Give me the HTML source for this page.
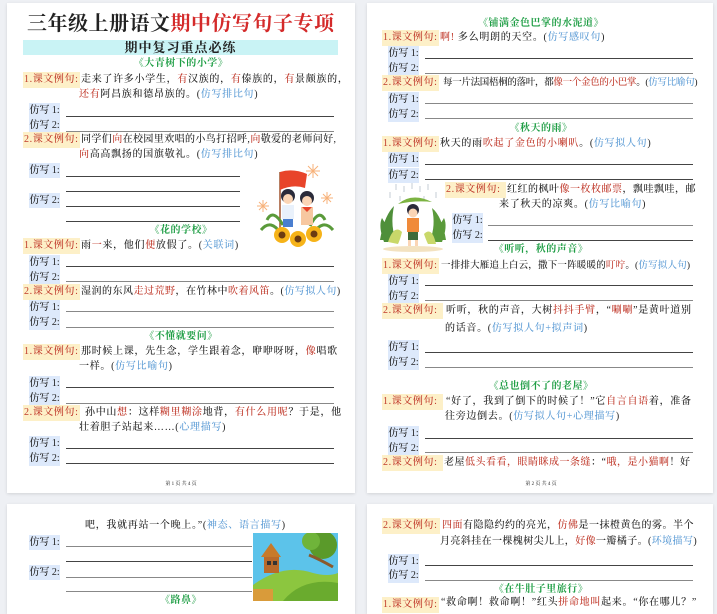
<!DOCTYPE html>
<html><head><meta charset="utf-8"><style>
*{margin:0;padding:0;box-sizing:border-box}
body{width:717px;height:601px;overflow:hidden;background:#eef0f4;position:relative;font-family:"Liberation Serif","Noto Serif CJK SC",serif;font-size:10px;color:#222}
.pg{position:absolute;background:#fff;box-shadow:0 1px 3px rgba(0,0,0,.12)}
.t{position:absolute;line-height:14px;white-space:nowrap;letter-spacing:0.7px;font-weight:500}
.r{color:#c0392b}.b{color:#5b9bd5}
.g{position:absolute;color:#1f9e45;font-weight:bold;line-height:14px;white-space:nowrap;transform:translateX(-50%);letter-spacing:0.5px}
.lab{position:absolute;background:#fdf0c8;color:#c0392b;height:16px;line-height:16px;padding-left:1px;white-space:nowrap;font-weight:500;letter-spacing:0.6px}
.fx{position:absolute;background:#dde9fb;width:31px;height:15px;line-height:15px;text-align:center;white-space:nowrap;font-size:10px;font-weight:500}
.ln{position:absolute;height:0;border-top:1px solid #444}
.ft{position:absolute;font-size:5px;transform:translateX(-50%);white-space:nowrap;line-height:6px}
</style></head><body>

<div class="pg" style="left:7px;top:3px;width:348px;height:490px"></div>
<div class="pg" style="left:367px;top:3px;width:346px;height:490px"></div>
<div class="pg" style="left:7px;top:504px;width:348px;height:110px"></div>
<div class="pg" style="left:367px;top:504px;width:346px;height:110px"></div>

<!-- LEFT PAGE -->
<div class="t" style="left:27px;top:12px;font-size:20px;line-height:24px;font-weight:bold;letter-spacing:0.5px">三年级上册语文<span style="color:#d42a2a">期中仿写句子专项</span></div>
<div style="position:absolute;left:23px;top:40px;width:315px;height:15px;background:#c9f3f5;text-align:center;font-weight:bold;font-size:13px;line-height:15px;letter-spacing:1px">期中复习重点必练</div>

<div class="g" style="left:181px;top:57px">《大青树下的小学》</div>
<div class="lab" style="left:23px;top:72px;width:57px">1.课文例句:</div>
<div class="t" style="left:81px;top:73px">走来了许多小学生，<span class="r">有</span>汉族的，<span class="r">有</span>傣族的，<span class="r">有</span>景颇族的，</div>
<div class="t" style="left:79px;top:88px"><span class="r">还有</span>阿昌族和德昂族的。(<span class="b">仿写排比句</span>)</div>
<div class="fx" style="left:29px;top:103px">仿写 1:</div><div class="ln" style="left:66px;top:116px;width:268px"></div>
<div class="fx" style="left:29px;top:118px">仿写 2:</div><div class="ln" style="left:66px;top:131px;width:268px;border-color:#888"></div>

<div class="lab" style="left:23px;top:132px;width:57px">2.课文例句:</div>
<div class="t" style="left:81px;top:133px;letter-spacing:0.4px">同学们<span class="r">向</span>在校园里欢唱的小鸟打招呼,<span class="r">向</span>敬爱的老师问好,</div>
<div class="t" style="left:79px;top:148px"><span class="r">向</span>高高飘扬的国旗敬礼。(<span class="b">仿写排比句</span>)</div>
<div class="fx" style="left:29px;top:163px">仿写 1:</div><div class="ln" style="left:66px;top:176px;width:174px"></div>
<div class="ln" style="left:66px;top:191px;width:174px"></div>
<div class="fx" style="left:29px;top:193px">仿写 2:</div><div class="ln" style="left:66px;top:206px;width:174px"></div>
<div class="ln" style="left:66px;top:221px;width:174px"></div>

<svg style="position:absolute;left:255px;top:160px" width="85" height="88" viewBox="0 0 85 88">
<g stroke="#f7b27a" stroke-width="1"><path d="M58 4l0 14M51 11h14M53 6l10 10M63 6l-10 10"/><path d="M72 32l0 12M66 38h12M68 34l8 8M76 34l-8 8"/><path d="M8 40l0 12M2 46h12M4 42l8 8M12 42l-8 8"/></g>
<path d="M25 12 L25 75" stroke="#a0522d" stroke-width="1.5"/>
<path d="M25 12 Q38 8 52 14 L50 28 Q38 24 25 30Z" fill="#e8442a"/>
<path d="M12 60 Q18 48 28 65M70 60 Q64 48 55 66M6 70 Q16 58 26 74M78 70 Q68 58 58 74" stroke="#5a9a3a" stroke-width="3" fill="none"/>
<circle cx="33" cy="36" r="7" fill="#2b2b3a"/><circle cx="33" cy="39" r="5" fill="#fbd5b5"/>
<rect x="27" y="45" width="12" height="14" fill="#e9f1fb"/><rect x="28" y="59" width="10" height="8" fill="#4a7fd0"/>
<circle cx="52" cy="38" r="7" fill="#2b2b3a"/><circle cx="52" cy="41" r="5" fill="#fbd5b5"/>
<rect x="46" y="47" width="12" height="18" fill="#f7c7a0"/><path d="M47 47l5 5 5-5" fill="#e8442a"/>
<g fill="#f6b319"><circle cx="27" cy="75" r="8"/><circle cx="43" cy="79" r="8"/><circle cx="59" cy="74" r="8"/></g>
<g fill="#6b3b12"><circle cx="27" cy="75" r="3.5"/><circle cx="43" cy="79" r="3.5"/><circle cx="59" cy="74" r="3.5"/></g>
</svg>

<div class="g" style="left:181px;top:224px">《花的学校》</div>
<div class="lab" style="left:23px;top:238px;width:57px">1.课文例句:</div>
<div class="t" style="left:81px;top:239px">雨<span class="r">一</span>来，他们<span class="r">便</span>放假了。(<span class="b">关联词</span>)</div>
<div class="fx" style="left:29px;top:255px">仿写 1:</div><div class="ln" style="left:66px;top:266px;width:268px"></div>
<div class="fx" style="left:29px;top:270px">仿写 2:</div><div class="ln" style="left:66px;top:281px;width:268px;border-color:#888"></div>
<div class="lab" style="left:23px;top:284px;width:57px">2.课文例句:</div>
<div class="t" style="left:81px;top:285px;letter-spacing:0.5px">湿润的东风<span class="r">走过荒野</span>，在竹林中<span class="r">吹着风笛</span>。(<span class="b">仿写拟人句</span>)</div>
<div class="fx" style="left:29px;top:300px">仿写 1:</div><div class="ln" style="left:66px;top:311px;width:268px;border-color:#888"></div>
<div class="fx" style="left:29px;top:315px">仿写 2:</div><div class="ln" style="left:66px;top:327px;width:268px;border-color:#888"></div>

<div class="g" style="left:181px;top:330px">《不懂就要问》</div>
<div class="lab" style="left:23px;top:344px;width:57px">1.课文例句:</div>
<div class="t" style="left:81px;top:345px">那时候上课，先生念，学生跟着念，咿咿呀呀，<span class="r">像</span>唱歌</div>
<div class="t" style="left:79px;top:360px">一样。(<span class="b">仿写比喻句</span>)</div>
<div class="fx" style="left:29px;top:376px">仿写 1:</div><div class="ln" style="left:66px;top:387px;width:268px"></div>
<div class="fx" style="left:29px;top:391px">仿写 2:</div><div class="ln" style="left:66px;top:403px;width:268px;border-color:#888"></div>
<div class="lab" style="left:23px;top:405px;width:57px">2.课文例句:</div>
<div class="t" style="left:85px;top:406px">孙中山<span class="r">想</span>：这样<span class="r">糊里糊涂</span>地背，<span class="r">有什么用呢</span>？于是，他</div>
<div class="t" style="left:79px;top:421px">壮着胆子站起来……(<span class="b">心理描写</span>)</div>
<div class="fx" style="left:29px;top:436px">仿写 1:</div><div class="ln" style="left:66px;top:448px;width:268px"></div>
<div class="fx" style="left:29px;top:451px">仿写 2:</div><div class="ln" style="left:66px;top:463px;width:268px"></div>
<div class="ft" style="left:181px;top:482px">第 1 页 共 4 页</div>

<!-- RIGHT PAGE -->
<div class="g" style="left:541px;top:17px">《铺满金色巴掌的水泥道》</div>
<div class="lab" style="left:382px;top:30px;width:57px">1.课文例句:</div>
<div class="t" style="left:440px;top:31px"><span class="r">啊!</span> 多么明朗的天空。(<span class="b">仿写感叹句</span>)</div>
<div class="fx" style="left:388px;top:46px">仿写 1:</div><div class="ln" style="left:425px;top:58px;width:268px"></div>
<div class="fx" style="left:388px;top:61px">仿写 2:</div><div class="ln" style="left:425px;top:73px;width:268px;border-color:#888"></div>
<div class="lab" style="left:382px;top:75px;width:57px">2.课文例句:</div>
<div class="t" style="left:443px;top:76px;font-size:9.5px;letter-spacing:-0.3px">每一片法国梧桐的落叶，都<span class="r">像一个金色的小巴掌</span>。(<span class="b">仿写比喻句</span>)</div>
<div class="fx" style="left:388px;top:92px">仿写 1:</div><div class="ln" style="left:425px;top:103px;width:268px;border-color:#888"></div>
<div class="fx" style="left:388px;top:107px">仿写 2:</div><div class="ln" style="left:425px;top:118px;width:268px;border-color:#888"></div>

<div class="g" style="left:541px;top:122px">《秋天的雨》</div>
<div class="lab" style="left:382px;top:136px;width:57px">1.课文例句:</div>
<div class="t" style="left:440px;top:137px">秋天的雨<span class="r">吹起了金色的小喇叭</span>。(<span class="b">仿写拟人句</span>)</div>
<div class="fx" style="left:388px;top:152px">仿写 1:</div><div class="ln" style="left:425px;top:164px;width:268px"></div>
<div class="fx" style="left:388px;top:168px">仿写 2:</div><div class="ln" style="left:425px;top:179px;width:268px"></div>

<svg style="position:absolute;left:376px;top:182px" width="74" height="72" viewBox="0 0 74 72">
<g stroke="#b8c2cc" stroke-width="0.8"><path d="M20 2v6M28 4v6M36 1v6M44 4v6M52 2v6M24 14v5M48 14v5M60 10v6M14 10v6"/></g>
<path d="M4 58 Q8 34 18 24 Q14 44 20 58Z M8 60 Q2 44 6 36 Q14 48 16 60Z" fill="#4f8f3a"/>
<path d="M70 58 Q66 34 56 26 Q60 44 54 58Z M66 60 Q72 44 68 36 Q60 48 58 60Z" fill="#5a9a3a"/>
<path d="M12 60 Q18 42 26 50 Q24 58 22 62Z M60 62 Q56 44 48 52 Q50 58 52 62Z" fill="#c9d86a"/>
<path d="M22 22 Q36 10 56 20 Q40 18 22 22Z" fill="#7cb342"/>
<circle cx="37" cy="28" r="6" fill="#2b2b3a"/><circle cx="37" cy="31" r="4.5" fill="#fbd5b5"/>
<rect x="31" y="36" width="12" height="14" fill="#f08a3a"/><rect x="32" y="50" width="10" height="8" fill="#3e6b3a"/>
<rect x="32" y="58" width="3" height="6" fill="#fbd5b5"/><rect x="39" y="58" width="3" height="6" fill="#fbd5b5"/>
<ellipse cx="37" cy="67" rx="30" ry="3" fill="#f3e2c0"/>
</svg>

<div class="lab" style="left:445px;top:182px;width:61px">2.课文例句:</div>
<div class="t" style="left:507px;top:183px;letter-spacing:0.5px">红红的枫叶<span class="r">像一枚枚邮票</span>，飘哇飘哇，邮</div>
<div class="t" style="left:499px;top:198px">来了秋天的凉爽。(<span class="b">仿写比喻句</span>)</div>
<div class="fx" style="left:452px;top:213px">仿写 1:</div><div class="ln" style="left:488px;top:225px;width:205px;border-color:#888"></div>
<div class="fx" style="left:452px;top:228px">仿写 2:</div><div class="ln" style="left:488px;top:240px;width:205px"></div>

<div class="g" style="left:541px;top:243px">《听听，秋的声音》</div>
<div class="lab" style="left:382px;top:258px;width:57px">1.课文例句:</div>
<div class="t" style="left:441px;top:259px;font-size:9.5px;letter-spacing:0.2px">一排排大雁追上白云，撒下一阵暖暖的<span class="r">叮咛</span>。(<span class="b">仿写拟人句</span>)</div>
<div class="fx" style="left:388px;top:274px">仿写 1:</div><div class="ln" style="left:425px;top:285px;width:268px"></div>
<div class="fx" style="left:388px;top:289px">仿写 2:</div><div class="ln" style="left:425px;top:300px;width:268px;border-color:#888"></div>
<div class="lab" style="left:382px;top:303px;width:61px">2.课文例句:</div>
<div class="t" style="left:446px;top:304px">听听，秋的声音，大树<span class="r">抖抖手臂</span>，“<span class="r">唰唰</span>”是黄叶道别</div>
<div class="t" style="left:445px;top:322px">的话音。(<span class="b">仿写拟人句+拟声词</span>)</div>
<div class="fx" style="left:388px;top:340px">仿写 1:</div><div class="ln" style="left:425px;top:352px;width:268px"></div>
<div class="fx" style="left:388px;top:355px">仿写 2:</div><div class="ln" style="left:425px;top:367px;width:268px;border-color:#888"></div>

<div class="g" style="left:541px;top:380px">《总也倒不了的老屋》</div>
<div class="lab" style="left:382px;top:394px;width:61px">1.课文例句:</div>
<div class="t" style="left:446px;top:395px">“好了，我到了倒下的时候了！”它<span class="r">自言自语</span>着，准备</div>
<div class="t" style="left:445px;top:410px">往旁边倒去。(<span class="b">仿写拟人句+心理描写</span>)</div>
<div class="fx" style="left:388px;top:426px">仿写 1:</div><div class="ln" style="left:425px;top:438px;width:268px"></div>
<div class="fx" style="left:388px;top:441px">仿写 2:</div><div class="ln" style="left:425px;top:452px;width:268px;border-color:#888"></div>
<div class="lab" style="left:382px;top:455px;width:61px">2.课文例句:</div>
<div class="t" style="left:444px;top:456px;letter-spacing:0.5px">老屋<span class="r">低头看看，眼睛眯成一条缝</span>：“<span class="r">哦，是小猫啊</span>！好</div>
<div class="ft" style="left:541px;top:482px">第 2 页 共 4 页</div>

<!-- BOTTOM LEFT -->
<div class="t" style="left:85px;top:519px">吧，我就再站一个晚上。”(<span class="b">神态、语言描写</span>)</div>
<div class="fx" style="left:29px;top:535px">仿写 1:</div><div class="ln" style="left:66px;top:546px;width:186px;border-color:#888"></div>
<div class="ln" style="left:66px;top:561px;width:186px"></div>
<div class="fx" style="left:29px;top:565px">仿写 2:</div><div class="ln" style="left:66px;top:577px;width:186px;border-color:#888"></div>
<div class="ln" style="left:66px;top:591px;width:186px;border-color:#888"></div>
<svg style="position:absolute;left:253px;top:533px" width="85" height="68" viewBox="0 0 85 68">
<rect width="85" height="68" fill="#5cc3ea"/>
<path d="M0 52 Q30 30 60 40 Q75 44 85 40 V68 H0Z" fill="#8cc63f"/>
<path d="M30 68 Q50 44 85 50 V68Z" fill="#6aab2e"/>
<circle cx="70" cy="12" r="14" fill="#5a9a2a"/><circle cx="58" cy="8" r="9" fill="#6fb43a"/>
<path d="M56 22 Q66 26 80 34" stroke="#8b5a2b" stroke-width="3" fill="none"/>
<path d="M8 24 L18 10 L28 24Z" fill="#c77a2a"/><rect x="11" y="24" width="15" height="16" fill="#b96a2a"/>
<rect x="14" y="28" width="4" height="4" fill="#333"/><rect x="20" y="28" width="4" height="4" fill="#333"/>
<rect x="0" y="56" width="20" height="12" fill="#d99b3a"/>
</svg>
<div class="g" style="left:181px;top:594px">《路鼻》</div>

<!-- BOTTOM RIGHT -->
<div class="lab" style="left:382px;top:518px;width:58px">2.课文例句:</div>
<div class="t" style="left:442px;top:519px;letter-spacing:0.5px"><span class="r">四面</span>有隐隐约约的亮光，<span class="r">仿佛</span>是一抹橙黄色的雾。半个</div>
<div class="t" style="left:440px;top:535px;letter-spacing:0.4px">月亮斜挂在一棵槐树尖儿上，<span class="r">好像</span>一瓣橘子。(<span class="b">环境描写</span>)</div>
<div class="fx" style="left:388px;top:554px">仿写 1:</div><div class="ln" style="left:425px;top:565px;width:268px"></div>
<div class="fx" style="left:388px;top:568px">仿写 2:</div><div class="ln" style="left:425px;top:580px;width:268px;border-color:#888"></div>
<div class="g" style="left:541px;top:583px">《在牛肚子里旅行》</div>
<div class="lab" style="left:382px;top:597px;width:57px">1.课文例句:</div>
<div class="t" style="left:441px;top:596px">“救命啊！救命啊！”红头<span class="r">拼命地叫</span>起来。“你在哪儿？”</div>
</body></html>
